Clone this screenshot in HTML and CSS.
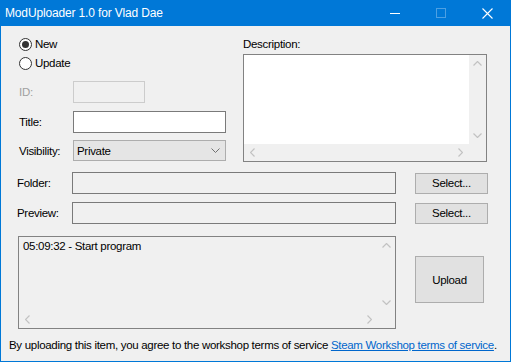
FILE: index.html
```html
<!DOCTYPE html>
<html>
<head>
<meta charset="utf-8">
<link rel="stylesheet" href="styles.css">
</head>
<body>
<div class="window">
  <div class="titlebar">
    <span class="title">ModUploader 1.0 for Vlad Dae</span>
    <div class="caption">
      <span class="cbtn"><svg width="10" height="10" viewBox="0 0 10 10"><line x1="0" y1="5.5" x2="10" y2="5.5" stroke="#fff" stroke-width="1"/></svg></span>
      <span class="cbtn"><svg width="10" height="10" viewBox="0 0 10 10"><rect x="0.5" y="0.5" width="9" height="9" fill="none" stroke="rgba(255,255,255,0.3)" stroke-width="1"/></svg></span>
      <span class="cbtn"><svg width="11" height="11" viewBox="0 0 11 11"><path d="M0.5 0.5 L10.5 10.5 M10.5 0.5 L0.5 10.5" stroke="#fff" stroke-width="1.1" fill="none"/></svg></span>
    </div>
  </div>
  <div class="client">
    <div class="top">
      <div class="left">
        <div class="radio"><span class="circle checked"></span>New</div>
        <div class="radio second"><span class="circle"></span>Update</div>
        <div class="field id-row"><span class="lbl disabled">ID:</span><span class="box box-disabled box-id"></span></div>
        <div class="field title-row"><span class="lbl">Title:</span><span class="box box-white box-title"></span></div>
        <div class="field vis-row"><span class="lbl">Visibility:</span>
          <span class="combo">Private<svg class="chev" width="9" height="5" viewBox="0 0 9 5"><polyline points="0.5,0.5 4.5,4.5 8.5,0.5" fill="none" stroke="#707070" stroke-width="1"/></svg></span>
        </div>
      </div>
      <div class="right">
        <div class="desc-label">Description:</div>
        <div class="scrollbox memo">
          <div class="sb-body"></div>
          <div class="vbar">
            <span class="arr"><svg width="9" height="5" viewBox="0 0 9 5"><polyline points="0.5,4.5 4.5,0.5 8.5,4.5" fill="none" stroke="#c2c2c2" stroke-width="1.2"/></svg></span>
            <span class="arr"><svg width="9" height="5" viewBox="0 0 9 5"><polyline points="0.5,0.5 4.5,4.5 8.5,0.5" fill="none" stroke="#c2c2c2" stroke-width="1.2"/></svg></span>
          </div>
          <div class="hbar">
            <span class="arr"><svg width="5" height="9" viewBox="0 0 5 9"><polyline points="4.5,0.5 0.5,4.5 4.5,8.5" fill="none" stroke="#c2c2c2" stroke-width="1.2"/></svg></span>
            <span class="arr"><svg width="5" height="9" viewBox="0 0 5 9"><polyline points="0.5,0.5 4.5,4.5 0.5,8.5" fill="none" stroke="#c2c2c2" stroke-width="1.2"/></svg></span>
          </div>
          <div class="corner"></div>
        </div>
      </div>
    </div>

    <div class="pathrow folder-row">
      <span class="plbl">Folder:</span>
      <span class="box box-path"></span>
      <span class="btn select">Select...</span>
    </div>
    <div class="pathrow preview-row">
      <span class="plbl">Preview:</span>
      <span class="box box-path"></span>
      <span class="btn select">Select...</span>
    </div>

    <div class="bottom">
      <div class="scrollbox log">
        <div class="sb-body log-text">05:09:32 - Start program</div>
        <div class="vbar">
          <span class="arr"><svg width="9" height="5" viewBox="0 0 9 5"><polyline points="0.5,4.5 4.5,0.5 8.5,4.5" fill="none" stroke="#c2c2c2" stroke-width="1.2"/></svg></span>
          <span class="arr"><svg width="9" height="5" viewBox="0 0 9 5"><polyline points="0.5,0.5 4.5,4.5 8.5,0.5" fill="none" stroke="#c2c2c2" stroke-width="1.2"/></svg></span>
        </div>
        <div class="hbar">
          <span class="arr"><svg width="5" height="9" viewBox="0 0 5 9"><polyline points="4.5,0.5 0.5,4.5 4.5,8.5" fill="none" stroke="#c2c2c2" stroke-width="1.2"/></svg></span>
          <span class="arr"><svg width="5" height="9" viewBox="0 0 5 9"><polyline points="0.5,0.5 4.5,4.5 0.5,8.5" fill="none" stroke="#c2c2c2" stroke-width="1.2"/></svg></span>
        </div>
        <div class="corner"></div>
      </div>
      <span class="btn upload">Upload</span>
    </div>

    <div class="footer">By uploading this item, you agree to the workshop terms of service <a class="link" href="#">Steam Workshop terms of service</a>.</div>
  </div>
</div>
</body>
</html>
```
FILE: styles.css
```css
* { box-sizing: border-box; }
html, body { margin: 0; padding: 0; }
body {
  width: 511px;
  height: 362px;
  overflow: hidden;
  font-family: "Liberation Sans", Arial, sans-serif;
  font-size: 11.5px;
  letter-spacing: -0.3px;
  color: #000;
  background: #f0f0f0;
}
.window {
  width: 511px;
  height: 362px;
  background: #0078d7;
  padding: 0 1px 1px 1px;
  display: flex;
  flex-direction: column;
}
.titlebar {
  height: 26px;
  flex: 0 0 26px;
  display: flex;
  align-items: center;
  color: #fff;
}
.title {
  padding-left: 4px;
  font-size: 12px;
  letter-spacing: -0.15px;
  flex: 1;
  line-height: 26px;
}
.caption { display: flex; height: 26px; }
.cbtn {
  width: 46px;
  height: 26px;
  display: flex;
  align-items: center;
  justify-content: center;
}
.cbtn svg { display: block; }
.client {
  flex: 1;
  background: #f0f0f0;
  display: flex;
  flex-direction: column;
}
.top {
  display: flex;
  margin-top: 10px;
  padding-left: 18px;
}
.left {
  width: 207px;
  display: flex;
  flex-direction: column;
}
.radio {
  height: 16px;
  line-height: 16px;
  display: flex;
  align-items: center;
}
.radio.second { margin-top: 3px; }
.circle {
  width: 13px;
  height: 13px;
  border: 1px solid #333;
  border-radius: 50%;
  background: #fff;
  margin-right: 3px;
  display: flex;
  align-items: center;
  justify-content: center;
}
.circle.checked::after {
  content: "";
  width: 7px;
  height: 7px;
  border-radius: 50%;
  background: #333;
}
.field {
  display: flex;
  align-items: center;
}
.id-row { margin-top: 10px; }
.title-row { margin-top: 8px; }
.vis-row { margin-top: 7px; }
.lbl { width: 54px; line-height: 16px; }
.lbl.disabled { color: #a0a0a0; }
.box { display: block; height: 22px; }
.box-disabled { border: 1px solid #cccccc; background: #f0f0f0; }
.box-white { border: 1px solid #7a7a7a; background: #fff; }
.box-id { width: 72px; }
.box-title { width: 153px; }
.combo {
  width: 153px;
  height: 21px;
  border: 1px solid #adadad;
  background: #e5e5e5;
  display: flex;
  align-items: center;
  padding-left: 3px;
  padding-right: 5px;
  justify-content: space-between;
}
.chev { display: block; }
.right {
  margin-left: 17px;
  width: 244px;
  display: flex;
  flex-direction: column;
}
.desc-label { line-height: 16px; height: 16px; }
.scrollbox {
  display: grid;
  grid-template-columns: 1fr 17px;
  grid-template-rows: 1fr 17px;
  border: 1px solid #828282;
}
.memo { margin-top: 2px; height: 108px; }
.memo .sb-body { background: #fff; }
.vbar, .hbar { background: #f0f0f0; display: flex; justify-content: space-between; }
.vbar { flex-direction: column; }
.corner { background: #f0f0f0; }
.arr {
  width: 17px;
  height: 17px;
  display: flex;
  align-items: center;
  justify-content: center;
}
.arr svg { display: block; }
.pathrow {
  display: flex;
  align-items: center;
  padding-left: 16px;
}
.folder-row { margin-top: 10px; }
.preview-row { margin-top: 8px; }
.plbl { width: 55px; line-height: 16px; }
.box-path {
  width: 324px;
  border: 1px solid #7a7a7a;
  background: #f0f0f0;
}
.btn {
  display: flex;
  align-items: center;
  justify-content: center;
  background: #e1e1e1;
  border: 1px solid #adadad;
}
.select {
  margin-left: 19px;
  width: 73px;
  height: 21px;
}
.bottom {
  display: flex;
  align-items: flex-start;
  margin-top: 12px;
  padding-left: 17px;
}
.log {
  width: 378px;
  height: 93px;
  background: #f0f0f0;
}
.log-text {
  padding: 1px 0 0 4px;
  line-height: 16px;
}
.upload {
  margin-left: 19px;
  margin-top: 20px;
  width: 69px;
  height: 47px;
}
.footer {
  margin-top: 8px;
  padding-left: 8px;
  line-height: 16px;
  white-space: nowrap;
}
.link { color: #0066cc; text-decoration: underline; }
```
